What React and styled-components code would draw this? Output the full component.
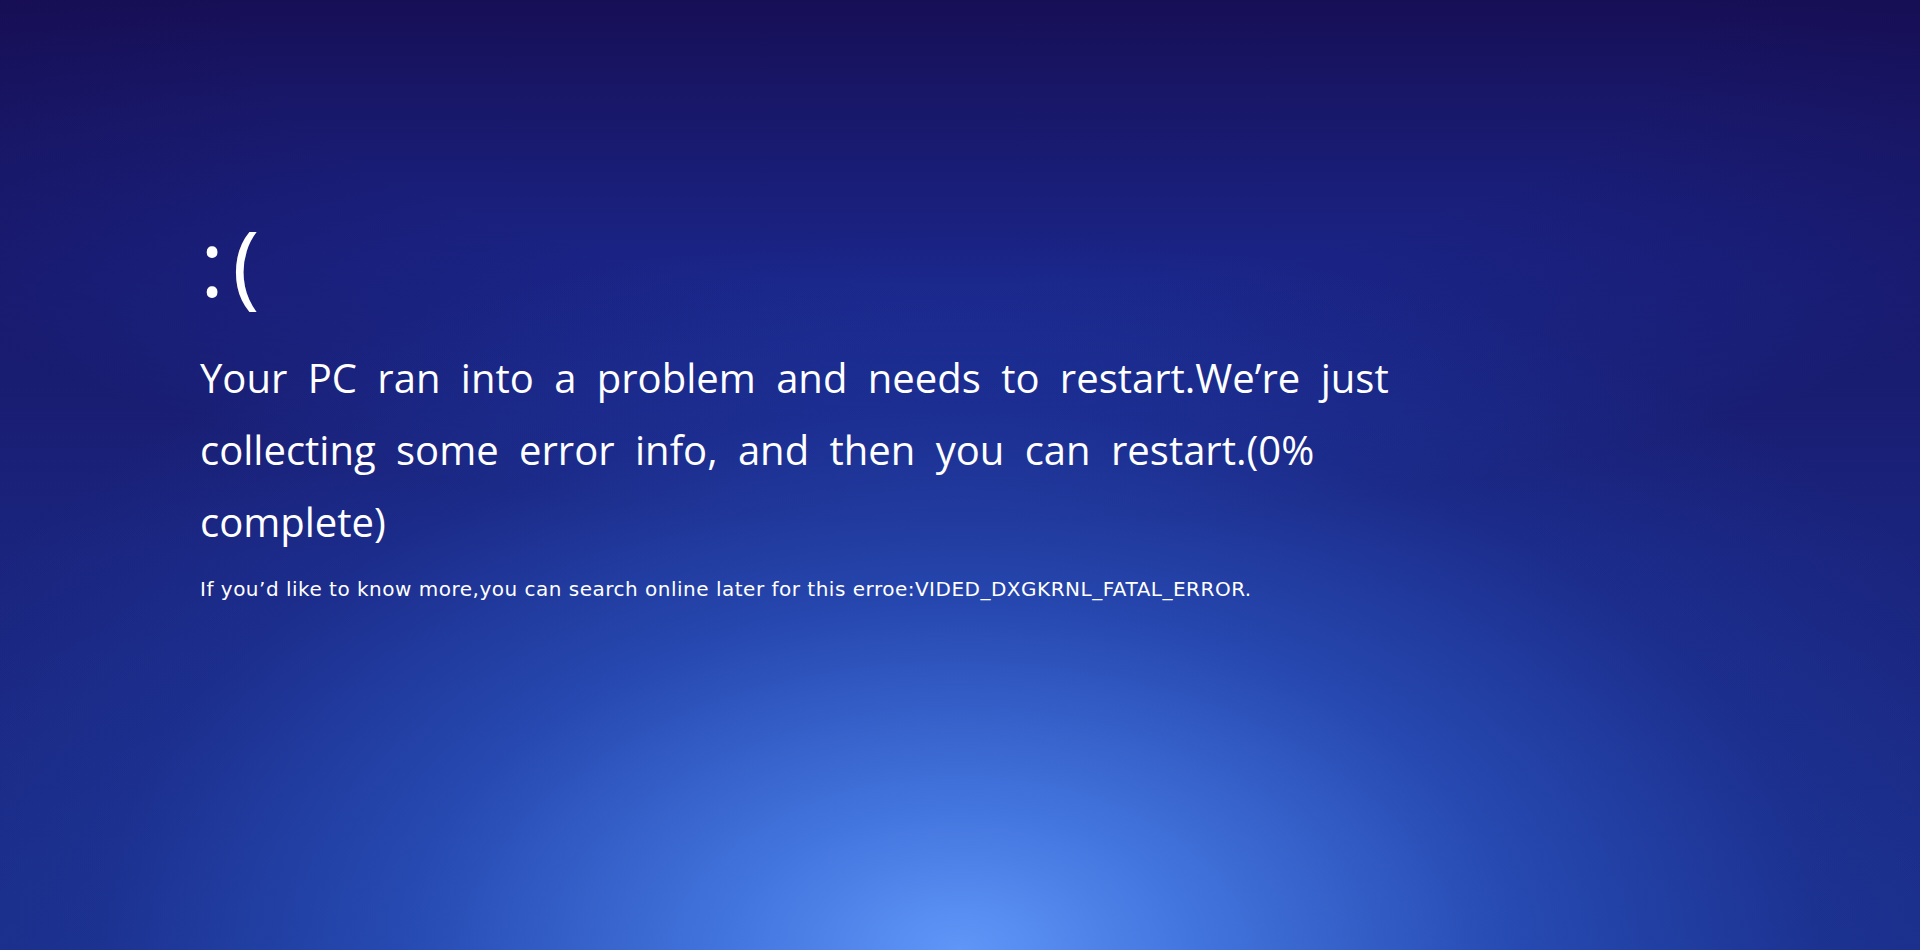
import React from "react";
import styled, { createGlobalStyle } from "styled-components";

const Global = createGlobalStyle`
  html, body { margin: 0; padding: 0; height: 100%; }
  body { overflow: hidden; }
  #root { height: 100%; }
`;

const Screen = styled.div`
  width: 100vw;
  height: 950px;
  box-sizing: border-box;
  padding: 216px 0 0 200px;
  color: #ffffff;
  font-family: "Open Sans", "Noto Sans", sans-serif;
  background:
    radial-gradient(ellipse 1150px 720px at 50% 100%, rgba(96,150,248,1) 0%, rgba(74,130,238,0.85) 20%, rgba(48,100,216,0.55) 48%, rgba(34,76,196,0.2) 75%, rgba(34,72,190,0) 100%),
    radial-gradient(ellipse 1300px 520px at 50% 0%, rgba(26,28,112,0) 0%, rgba(22,14,80,0) 55%, rgba(22,12,78,0.5) 100%),
    linear-gradient(180deg, #170f56 0%, #1a2486 28%, #1e3cac 58%, #1f4cbc 100%);
`;

const Face = styled.div`
  font-size: 92px;
  line-height: 1;
  font-weight: 400;
  letter-spacing: 8px;
  height: 126px;
`;

const Message = styled.p`
  margin: 0;
  font-size: 40px;
  line-height: 72px;
  word-spacing: 10px;
`;

const Line = styled.span`
  display: block;
`;

const Detail = styled.p`
  margin: 18px 0 0;
  font-family: "DejaVu Sans", sans-serif;
  font-size: 20px;
  line-height: 26px;
  letter-spacing: 0.5px;
`;

export default function App() {
  return (
    <>
      <Global />
      <Screen>
        <Face>:(</Face>
        <Message>
          <Line>Your PC ran into a problem and needs to restart.We’re just</Line>
          <Line>collecting some error info, and then you can restart.(0%</Line>
          <Line>complete)</Line>
        </Message>
        <Detail>
          If you’d like to know more,you can search online later for this erroe:VIDED_DXGKRNL_FATAL_ERROR.
        </Detail>
      </Screen>
    </>
  );
}
